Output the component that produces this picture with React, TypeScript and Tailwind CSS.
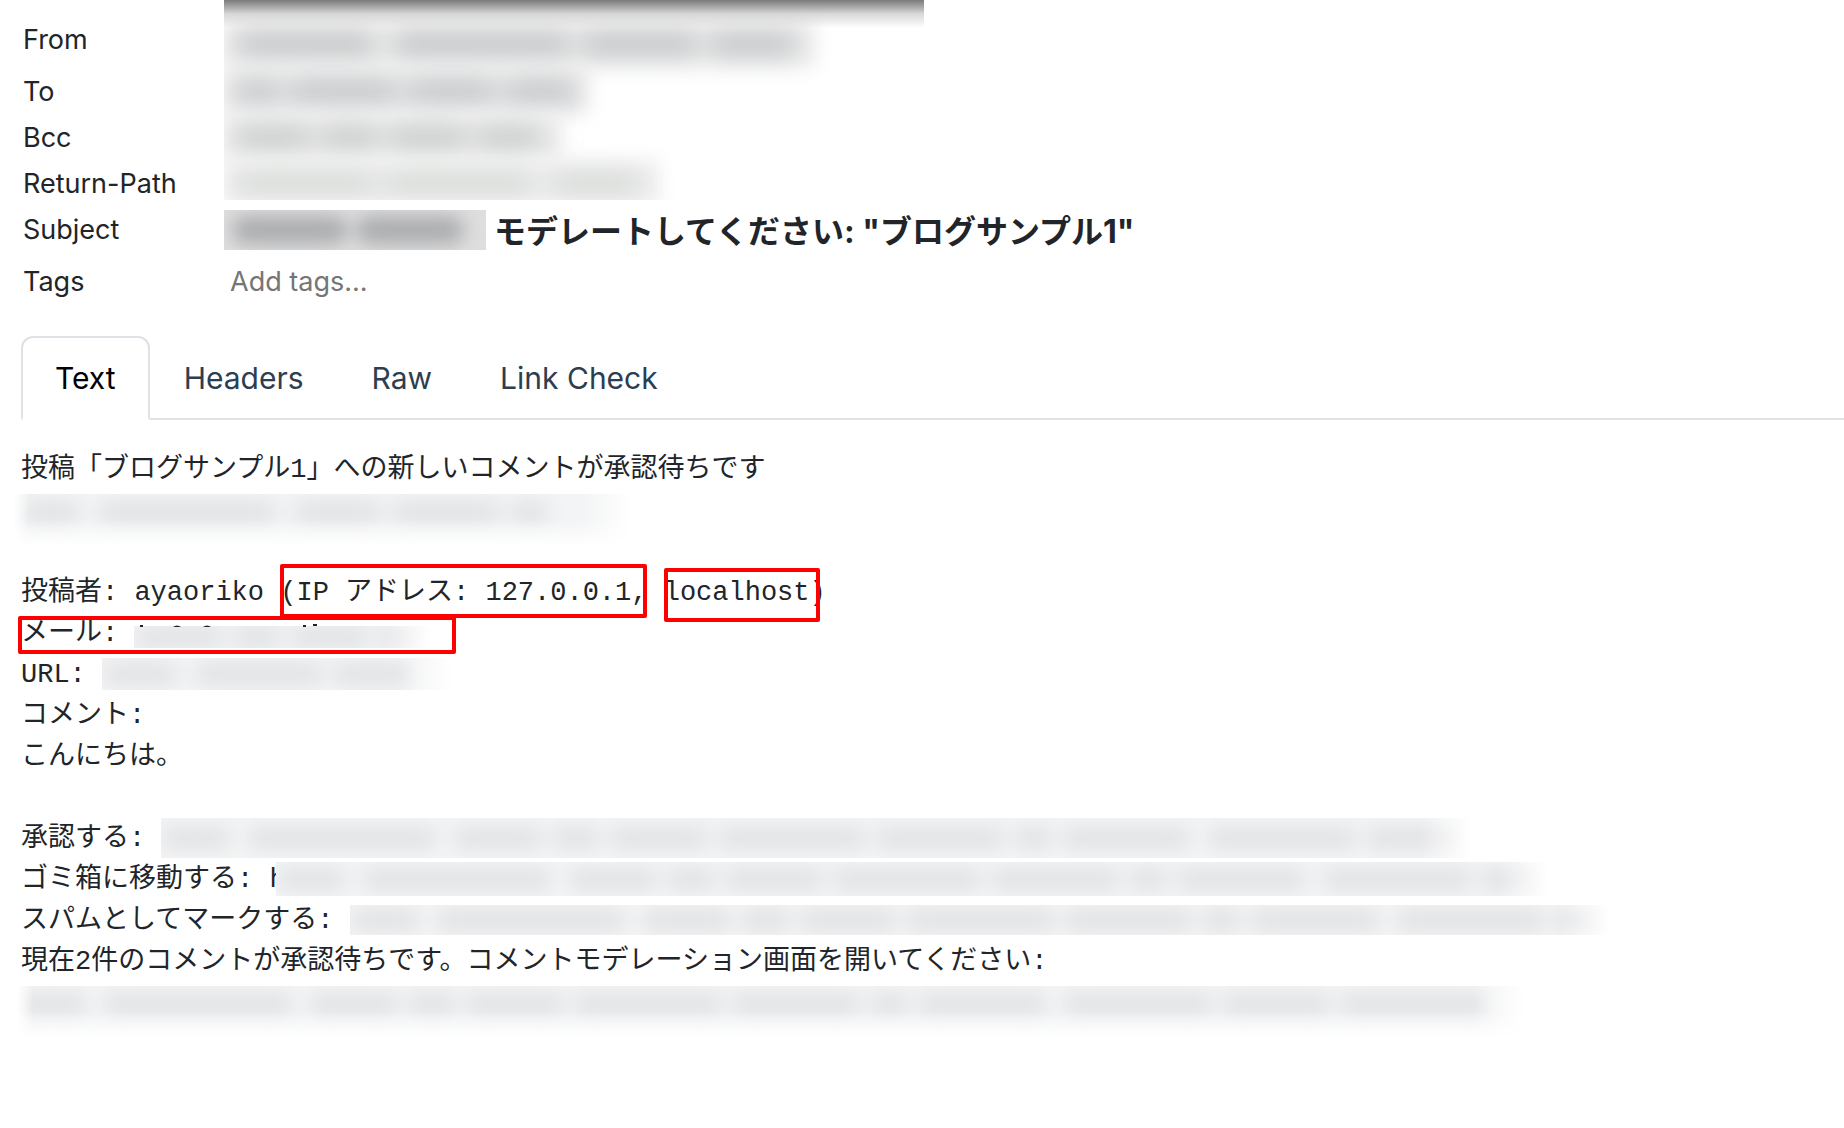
import { useState } from "react";
import type { ReactNode } from "react";
import clsx from "clsx";

type TabId = "text" | "headers" | "raw" | "links";

const TABS: { id: TabId; label: string }[] = [
  { id: "text", label: "Text" },
  { id: "headers", label: "Headers" },
  { id: "raw", label: "Raw" },
  { id: "links", label: "Link Check" },
];

const ADDRESS_LABELS = ["To", "Bcc", "Return-Path"];

// widths of the dark patches, left to right
const URL_PATCHES = [70, 0, 190, 0, 90, 50, 100, 150, 130, 40, 130, 0, 150, 110, 150];

function Smudges({ widths, className }: { widths: number[]; className: string }) {
  return (
    <div className="flex h-full items-center gap-2 blur-[9px]">
      {widths.map((width, i) => (
        <span key={i} className={clsx("shrink-0 rounded-full", className)} style={{ width }} />
      ))}
    </div>
  );
}

interface HiddenProps {
  className: string;
  widths?: number[];
  soft?: boolean;
}

// Hidden address: hard box edges around a soft grey haze. "soft" fades the bottom edge too.
function Hidden({ className, widths = URL_PATCHES, soft }: HiddenProps) {
  return (
    <span
      className={clsx(
        "relative block overflow-hidden bg-[#f3f4f5] mask-r-from-[calc(100%-50px)] mask-r-to-100%",
        soft
          ? "mt-4 h-[52px] pb-4 mask-b-from-50% mask-b-to-100% mask-l-from-[calc(100%-16px)] mask-l-to-100%"
          : "-mt-1",
        className
      )}
    >
      <Smudges widths={widths} className="h-6 bg-[#e3e4e6]" />
    </span>
  );
}

function Line({ children }: { children?: ReactNode }) {
  return <div className="relative flex h-[41px] items-center whitespace-pre">{children}</div>;
}

function Mark({ className }: { className: string }) {
  return (
    <span className={clsx("pointer-events-none absolute rounded-xs border-4 border-[#ff0000]", className)} />
  );
}

export default function App() {
  const [tab, setTab] = useState<TabId>("text");
  const [tags, setTags] = useState("");

  return (
    <main className="min-h-screen overflow-hidden bg-white font-['Inter','Noto_Sans_CJK_JP',sans-serif] text-[27px] text-[#212529]">
      {/* Addresses */}
      <section className="flex items-start">
        <div className="w-56 shrink-0 pt-[11px] pl-[23px]">
          <div className="flex h-[58px] items-center">From</div>
          {ADDRESS_LABELS.map((label) => (
            <div key={label} className="flex h-[46px] items-center">
              {label}
            </div>
          ))}
        </div>
        <div className="relative h-[200px] w-[700px] overflow-hidden pt-5">
          <div className="h-12 w-[592px] bg-[#ededed] blur-[9px]">
            <Smudges widths={[4, 140, 0, 180, 120, 90]} className="h-6 bg-[#c3c5c7]" />
          </div>
          <div className="h-[46px] w-[364px] bg-[#e9e9e9] blur-[9px]">
            <Smudges widths={[4, 44, 110, 90, 72]} className="h-6 bg-[#c6c8cb]" />
          </div>
          <div className="h-[46px] w-[338px] bg-[#eaebea] blur-[9px]">
            <Smudges widths={[4, 76, 60, 80, 66]} className="h-6 bg-[#cbcecd]" />
          </div>
          <div className="h-[46px] w-[436px] bg-[#edeeed] blur-[9px]">
            <Smudges widths={[4, 140, 150, 0, 90]} className="h-6 bg-[#d9dcda]" />
          </div>
          <div className="absolute inset-x-0 top-0 h-7 bg-linear-to-b from-[#7a7a7a] via-[#c9c9c9]/70 to-transparent" />
        </div>
      </section>

      {/* Subject */}
      <section className="flex h-[46px] items-center">
        <div className="w-56 shrink-0 pl-[23px]">Subject</div>
        <div className="h-10 w-[262px] shrink-0 overflow-hidden bg-[#dededf]">
          <Smudges widths={[0, 116, 108]} className="h-7 bg-[#acadaf]" />
        </div>
        <h1 className="mt-1 pl-2 text-[32px] leading-10 font-bold">モデレートしてください: "ブログサンプル1"</h1>
      </section>

      {/* Tags */}
      <section className="flex h-[58px] items-center">
        <label htmlFor="tags" className="w-56 shrink-0 pl-[23px]">
          Tags
        </label>
        <input
          id="tags"
          value={tags}
          onChange={(e) => setTags(e.target.value)}
          placeholder="Add tags..."
          className="grow bg-transparent pl-[6px] outline-none placeholder:text-[#757575]"
        />
      </section>

      {/* Tabs */}
      <nav className="mt-[25px] ml-[21px] flex border-b-2 border-[#dee2e6] text-[30px]">
        {TABS.map(({ id, label }) => (
          <button
            key={id}
            onClick={() => setTab(id)}
            className={clsx(
              "-mb-[2px] h-[84px] rounded-t-xl border-2 px-8",
              tab === id
                ? "border-[#dee2e6] border-b-white bg-white text-black"
                : "border-transparent text-[#2c3e50]"
            )}
          >
            {label}
          </button>
        ))}
      </nav>

      {/* Message text */}
      <article className="mt-[30px] pl-[21px] font-['Liberation_Mono','Noto_Sans_CJK_JP',monospace] leading-[41px]">
        <Line>投稿「ブログサンプル1」への新しいコメントが承認待ちです</Line>
        <Line>
          <Hidden soft className="-ml-2 w-[618px]" widths={[0, 60, 0, 180, 0, 90, 110, 40]} />
        </Line>
        <Line />
        <Line>
          <span>投稿者: ayaoriko </span>
          <span className="relative">
            (IP アドレス: 127.0.0.1,
            <Mark className="right-0 -bottom-1 left-0 -top-[9px]" />
          </span>
          <span> </span>
          <span className="relative">
            localhost
            <Mark className="-right-[10px] -bottom-2 left-0 -top-[5px]" />
          </span>
          <span>)</span>
        </Line>
        <Line>
          <span>メール: </span>
          <Hidden className="mt-1 h-[22px] w-[298px]" widths={[90, 50, 80, 50]} />
          {/* letter tops above the hidden address */}
          <svg className="absolute top-[10px] left-[118px]" width="180" height="3" fill="#212529">
            <rect x="1" y="1" width="3" height="2" />
            <path d="M34 3q4-3 8 0zM64 3q4-3 8 0z" />
            <rect x="164" y="1" width="3" height="2" />
            <rect x="174" y="0" width="4" height="2" />
          </svg>
          <Mark className="top-[2px] -left-[3px] h-[38px] w-[438px]" />
        </Line>
        <Line>
          <span>URL: </span>
          <Hidden className="h-8 w-[350px]" widths={[76, 0, 130, 80]} />
        </Line>
        <Line>コメント:</Line>
        <Line>こんにちは。</Line>
        <Line />
        <Line>
          <span>承認する: </span>
          <Hidden className="h-10 w-[1310px]" />
        </Line>
        <Line>
          <span>ゴミ箱に移動する: h</span>
          <Hidden className="-ml-[10px] h-[34px] w-[1272px]" />
        </Line>
        <Line>
          <span>スパムとしてマークする: </span>
          <Hidden className="h-[30px] w-[1260px]" />
        </Line>
        <Line>現在2件のコメントが承認待ちです。コメントモデレーション画面を開いてください:</Line>
        <Line>
          <Hidden soft className="-ml-1 w-[1508px]" />
        </Line>
      </article>
    </main>
  );
}
